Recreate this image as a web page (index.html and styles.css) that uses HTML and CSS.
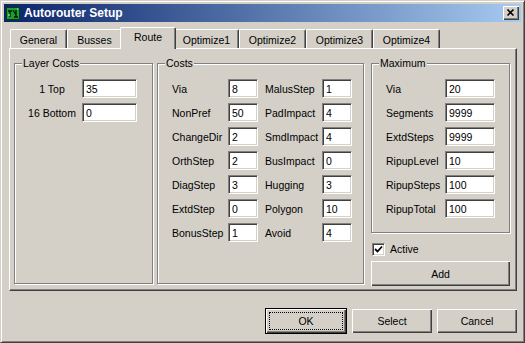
FILE: index.html
```html
<!DOCTYPE html>
<html>
<head>
    <meta charset="UTF-8">
    <title>Autorouter Setup</title>
    <link rel="stylesheet" href="styles.css">
</head>
<body>
    <div class="window">
        <div class="titlebar">
            <svg class="app-icon" width="16" height="16" viewBox="0 0 16 16">
                <rect x="1.5" y="2.5" width="13" height="12" fill="#19a035" stroke="#0b3a12"/>
                <path d="M3 6h4M5 6v6M8 5l3 5M11 5v7M9 12h4" stroke="#001a00" stroke-width="1.3" fill="none"/>
                <path d="M3 10h2M12 4h1" stroke="#c8ffc8" stroke-width="1" fill="none"/>
            </svg>
            <span class="title">Autorouter Setup</span>
            <div class="close">
                <svg width="16" height="14" viewBox="0 0 16 14">
                    <path d="M4.5 3.5l6 6M10.5 3.5l-6 6" stroke="#000" stroke-width="1.6" fill="none"/>
                </svg>
            </div>
        </div>

        <div class="client">
            <div class="tabs">
                <div class="tab" style="width:57px">General</div>
                <div class="tab" style="width:55px">Busses</div>
                <div class="tab selected" style="width:56px">Route</div>
                <div class="tab" style="width:65px">Optimize1</div>
                <div class="tab" style="width:67px">Optimize2</div>
                <div class="tab" style="width:67px">Optimize3</div>
                <div class="tab" style="width:67px">Optimize4</div>
            </div>

            <div class="panel">
                <div class="group layer-costs">
                    <span class="group-title">Layer Costs</span>
                    <div class="grid">
                        <label>1 Top</label><input class="field" type="text" value="35">
                        <label>16 Bottom</label><input class="field" type="text" value="0">
                    </div>
                </div>

                <div class="group costs">
                    <span class="group-title">Costs</span>
                    <div class="grid">
                        <label>Via</label><input class="field" type="text" value="8">
                        <label>MalusStep</label><input class="field" type="text" value="1">
                        <label>NonPref</label><input class="field" type="text" value="50">
                        <label>PadImpact</label><input class="field" type="text" value="4">
                        <label>ChangeDir</label><input class="field" type="text" value="2">
                        <label>SmdImpact</label><input class="field" type="text" value="4">
                        <label>OrthStep</label><input class="field" type="text" value="2">
                        <label>BusImpact</label><input class="field" type="text" value="0">
                        <label>DiagStep</label><input class="field" type="text" value="3">
                        <label>Hugging</label><input class="field" type="text" value="3">
                        <label>ExtdStep</label><input class="field" type="text" value="0">
                        <label>Polygon</label><input class="field" type="text" value="10">
                        <label>BonusStep</label><input class="field" type="text" value="1">
                        <label>Avoid</label><input class="field" type="text" value="4">
                    </div>
                </div>

                <div class="side">
                    <div class="group maximum">
                        <span class="group-title">Maximum</span>
                        <div class="grid">
                            <label>Via</label><input class="field" type="text" value="20">
                            <label>Segments</label><input class="field" type="text" value="9999">
                            <label>ExtdSteps</label><input class="field" type="text" value="9999">
                            <label>RipupLevel</label><input class="field" type="text" value="10">
                            <label>RipupSteps</label><input class="field" type="text" value="100">
                            <label>RipupTotal</label><input class="field" type="text" value="100">
                        </div>
                    </div>
                    <div class="check">
                        <span class="box">
                            <svg width="9" height="9" viewBox="0 0 9 9">
                                <path d="M1 4l2.5 2.5L8 1.5" stroke="#000" stroke-width="1.8" fill="none"/>
                            </svg>
                        </span>
                        <span>Active</span>
                    </div>
                    <button class="btn add">Add</button>
                </div>
            </div>

            <div class="actions">
                <button class="btn default">OK</button>
                <button class="btn">Select</button>
                <button class="btn">Cancel</button>
            </div>
        </div>
    </div>
</body>
</html>
```

FILE: styles.css
```css
:root {
    --face: #D4D0C8;
    --light: #FFFFFF;
    --shadow: #808080;
    --dark: #404040;
}

* {
    margin: 0;
    padding: 0;
    box-sizing: border-box;
}

body {
    font-family: 'Liberation Sans', Arial, sans-serif;
    font-size: 10.5px;
    background-color: var(--face);
    color: #000;
}

.window {
    width: 525px;
    height: 343px;
    background-color: var(--face);
    border: 1px solid;
    border-color: var(--face) var(--dark) var(--dark) var(--face);
    box-shadow: inset 1px 1px var(--light), inset -1px -1px var(--shadow);
    padding: 3px;
}

.titlebar {
    height: 18px;
    display: flex;
    align-items: center;
    background: linear-gradient(to right, #0A246A, #A6CAF0);
}

.app-icon {
    margin-left: 1px;
    flex: none;
}

.title {
    margin-left: 3px;
    color: #fff;
    font-weight: bold;
    font-size: 12px;
    flex: 1;
}

.close {
    width: 16px;
    height: 14px;
    margin-right: 2px;
    background-color: var(--face);
    box-shadow: inset 1px 1px var(--light), inset -1px -1px var(--dark), inset -2px -2px var(--shadow);
    display: flex;
}

.client {
    padding-top: 5px;
}

.tabs {
    display: flex;
    align-items: flex-end;
    height: 21px;
    padding-left: 6px;
}

.tab {
    height: 19px;
    padding-top: 3px;
    line-height: 14px;
    text-align: center;
    border-top: 1px solid var(--light);
    border-left: 1px solid var(--light);
    border-right: 1px solid var(--dark);
    border-radius: 2px 2px 0 0;
    box-shadow: inset -1px 0 var(--shadow);
    background-color: var(--face);
}

.tab.selected {
    height: 22px;
    margin: 0 -2px -1px -2px;
    padding-top: 2px;
    position: relative;
    z-index: 1;
}

.panel {
    width: 508px;
    height: 243px;
    margin-left: 5px;
    border: 1px solid;
    border-color: var(--light) var(--dark) var(--dark) var(--light);
    box-shadow: inset -1px -1px var(--shadow);
    padding: 14px 0 0 4px;
    display: flex;
    align-items: flex-start;
}

.group {
    position: relative;
    border: 1px solid var(--shadow);
    box-shadow: inset 1px 1px var(--light), 1px 1px var(--light);
    padding-top: 15px;
}

.group-title {
    position: absolute;
    top: -8px;
    left: 7px;
    padding: 0 1px;
    line-height: 14px;
    background-color: var(--face);
}

.grid {
    display: grid;
    row-gap: 5px;
    align-items: center;
}

.field {
    height: 19px;
    padding: 0 3px;
    font-family: 'Liberation Sans', Arial, sans-serif;
    font-size: 10.5px;
    color: #000;
    background-color: #fff;
    border: 1px solid;
    border-color: var(--shadow) var(--light) var(--light) var(--shadow);
    box-shadow: inset 1px 1px var(--dark), inset -1px -1px var(--face);
    outline: none;
}

.layer-costs {
    width: 139px;
    height: 221px;
    padding-left: 9px;
}

.layer-costs .grid {
    grid-template-columns: 56px 55px;
    column-gap: 2px;
}

.layer-costs label {
    text-align: center;
}

.layer-costs .field {
    width: 55px;
}

.costs {
    width: 207px;
    height: 221px;
    margin-left: 4px;
    padding-left: 14px;
}

.costs .grid {
    grid-template-columns: 56px 37px 57px 30px;
}

.costs .field {
    width: 30px;
}

.side {
    width: 139px;
    margin-left: 7px;
    display: flex;
    flex-direction: column;
}

.maximum {
    height: 170px;
    padding-left: 14px;
}

.maximum .grid {
    grid-template-columns: 59px 50px;
}

.maximum .field {
    width: 50px;
}

.check {
    margin-top: 10px;
    margin-left: 1px;
    display: flex;
    align-items: center;
    gap: 5px;
    line-height: 13px;
}

.check .box {
    width: 13px;
    height: 13px;
    background-color: #fff;
    border: 1px solid;
    border-color: var(--shadow) var(--light) var(--light) var(--shadow);
    box-shadow: inset 1px 1px var(--dark), inset -1px -1px var(--face);
    display: flex;
    align-items: center;
    justify-content: center;
}

.btn {
    position: relative;
    height: 24px;
    width: 80px;
    font-family: 'Liberation Sans', Arial, sans-serif;
    font-size: 10.5px;
    color: #000;
    background-color: var(--face);
    border: none;
    box-shadow: inset 1px 1px var(--light), inset -1px -1px var(--dark), inset -2px -2px var(--shadow);
}

.btn.add {
    width: 139px;
    height: 25px;
    margin-top: 5px;
}

.btn.default {
    width: 82px;
    height: 26px;
    border: 1px solid #000;
}

.btn.default::after {
    content: "";
    position: absolute;
    top: 3px;
    left: 3px;
    right: 3px;
    bottom: 3px;
    border: 1px dotted #000;
}

.actions {
    width: 508px;
    margin: 17px 0 0 5px;
    display: flex;
    justify-content: flex-end;
    align-items: center;
    gap: 5px;
}
```
